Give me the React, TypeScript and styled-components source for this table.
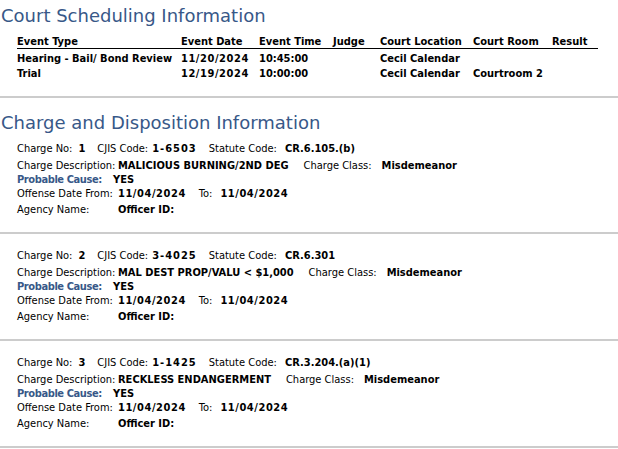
import React from "react";
import styled, { createGlobalStyle } from "styled-components";

const Global = createGlobalStyle`
  html, body { margin: 0; padding: 0; background: #ffffff; }
  body { font-family: "DejaVu Sans Condensed", "DejaVu Sans", sans-serif; color: #000; }
`;

const Page = styled.div`
  width: 618px;
  padding-top: 4px;
`;

const SectionTitle = styled.h2<{ $top?: number }>`
  margin: ${(p) => p.$top ?? 0}px 0 0 1px;
  font-family: "DejaVu Sans", sans-serif;
  font-weight: normal;
  font-size: 18px;
  line-height: 24px;
  color: #385888;
`;

const Divider = styled.div`
  height: 2px;
  background: #cccccc;
  width: 100%;
`;

const ScheduleTable = styled.div`
  margin: 7px 0 15px 17px;
  width: 581px;
  display: grid;
  grid-template-columns: 164px 78px 74px 47px 93px 79px 46px;
  font-size: 11px;
  font-weight: bold;
`;

const HeadCell = styled.div`
  line-height: 13px;
  border-bottom: 1px solid #000;
  margin-bottom: 2px;
  white-space: nowrap;
`;

const Cell = styled.div<{ $ls?: number }>`
  line-height: 15px;
  white-space: nowrap;
  letter-spacing: ${(p) => p.$ls ?? 0}px;
`;

const ChargeBlock = styled.div<{ $first?: boolean }>`
  padding: ${(p) => (p.$first ? 7 : 15)}px 0 15px 17px;
  font-size: 11px;
`;

const Row = styled.div<{ $gap?: number }>`
  display: flex;
  align-items: baseline;
  line-height: 14px;
  margin-top: ${(p) => p.$gap ?? 0}px;
  white-space: nowrap;
`;

const Label = styled.span<{ $w?: number; $after?: number }>`
  color: #000;
  display: inline-block;
  ${(p) => (p.$w ? `width: ${p.$w}px;` : "")}
  margin-right: ${(p) => p.$after ?? 0}px;
`;

const Value = styled.span<{ $after?: number; $ls?: number }>`
  font-weight: bold;
  display: inline-block;
  letter-spacing: ${(p) => p.$ls ?? 0}px;
  margin-right: ${(p) => p.$after ?? 0}px;
`;

const BlueLabel = styled.span<{ $w?: number }>`
  font-weight: bold;
  color: #385888;
  letter-spacing: -0.4px;
  display: inline-block;
  ${(p) => (p.$w ? `width: ${p.$w}px;` : "")}
`;

type Charge = {
  no: string;
  cjis: string;
  statute: string;
  desc: string;
  cls: string;
};

const charges: Charge[] = [
  { no: "1", cjis: "1-6503", statute: "CR.6.105.(b)", desc: "MALICIOUS BURNING/2ND DEG", cls: "Misdemeanor" },
  { no: "2", cjis: "3-4025", statute: "CR.6.301", desc: "MAL DEST PROP/VALU < $1,000", cls: "Misdemeanor" },
  { no: "3", cjis: "1-1425", statute: "CR.3.204.(a)(1)", desc: "RECKLESS ENDANGERMENT", cls: "Misdemeanor" },
];

const headers = ["Event Type", "Event Date", "Event Time", "Judge", "Court Location", "Court Room", "Result"];
const events = [
  ["Hearing - Bail/ Bond Review", "11/20/2024", "10:45:00", "", "Cecil Calendar", "", ""],
  ["Trial", "12/19/2024", "10:00:00", "", "Cecil Calendar", "Courtroom 2", ""],
];

export default function App() {
  return (
    <Page>
      <Global />
      <SectionTitle>Court Scheduling Information</SectionTitle>
      <ScheduleTable>
        {headers.map((h) => (
          <HeadCell key={h}>{h}</HeadCell>
        ))}
        {events.map((r, i) =>
          r.map((c, j) => (
            <Cell key={`${i}-${j}`} $ls={j === 1 ? 0.55 : 0}>
              {c}
            </Cell>
          ))
        )}
      </ScheduleTable>
      <Divider />
      <SectionTitle $top={13}>Charge and Disposition Information</SectionTitle>
      {charges.map((c, i) => (
        <React.Fragment key={c.no}>
          <ChargeBlock $first={i === 0}>
            <Row>
              <Label $after={6}>Charge No:</Label>
              <Value $after={12}>{c.no}</Value>
              <Label $after={4}>CJIS Code:</Label>
              <Value $after={12} $ls={1}>{c.cjis}</Value>
              <Label $after={8}>Statute Code:</Label>
              <Value>{c.statute}</Value>
            </Row>
            <Row $gap={3}>
              <Label $w={101}>Charge Description:</Label>
              <Value $after={15}>{c.desc}</Value>
              <Label $after={10}>Charge Class:</Label>
              <Value>{c.cls}</Value>
            </Row>
            <Row>
              <BlueLabel $w={96}>Probable Cause:</BlueLabel>
              <Value>YES</Value>
            </Row>
            <Row>
              <Label $w={101}>Offense Date From:</Label>
              <Value $after={13} $ls={0.55}>11/04/2024</Value>
              <Label $after={8}>To:</Label>
              <Value $ls={0.55}>11/04/2024</Value>
            </Row>
            <Row $gap={2}>
              <Label $w={101}>Agency Name:</Label>
              <Value>Officer ID:</Value>
            </Row>
          </ChargeBlock>
          <Divider />
        </React.Fragment>
      ))}
    </Page>
  );
}
